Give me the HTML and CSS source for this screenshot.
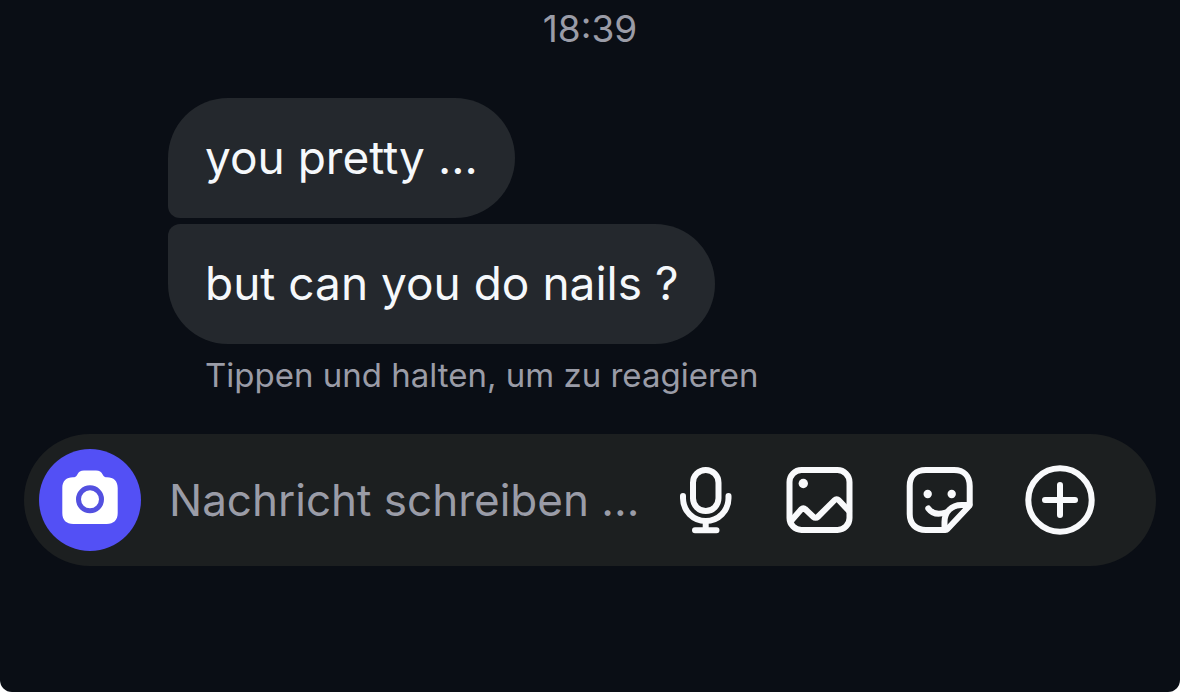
FILE: index.html
```html
<!DOCTYPE html>
<html lang="de">
<head>
    <meta charset="UTF-8" />
    <meta name="viewport" content="width=device-width, initial-scale=1.0"/>
    <title>Chat</title>
    <link rel="stylesheet" href="styles.css">
</head>
<body>
    <div class="chat">
        <main class="messages">
            <time class="timestamp" datetime="18:39">18:39</time>
            <div class="group">
                <p class="bubble bubble-first" lang="en">you pretty ...</p>
                <p class="bubble bubble-last" lang="en">but can you do nails ?</p>
                <p class="hint">Tippen und halten, um zu reagieren</p>
            </div>
        </main>

        <form class="composer">
            <button class="camera" type="button" aria-label="Kamera">
                <svg viewBox="0 0 60 60" width="60" height="60">
                    <path fill="#fff" d="M13 7.300c2 0 3.200-.8 4.200-2.600C18.800 1.800 20.500.5 24 .5h12c3.500 0 5.200 1.300 6.800 4.200 1 1.800 2.200 2.600 4.200 2.600 6.700 0 10.700 4 10.700 10.700v25c0 7-4 11-11 11H13.300c-7 0-11-4-11-11V18c0-6.700 4-10.700 10.700-10.700z"/>
                    <circle class="lens" cx="30" cy="29.300" r="11.500"/>
                </svg>
            </button>
            <input class="field" type="text" aria-label="Nachricht" placeholder="Nachricht schreiben ...">
            <div class="actions">
                <button class="action" type="button" aria-label="Sprachnachricht">
                    <svg viewBox="0 0 72 72" width="72" height="72">
                        <rect x="29" y="6" width="25.500" height="41" rx="12.700"/>
                        <path d="M19 32v2.300a22.700 22.700 0 0 0 45.500 0V32M41.700 57v9M31 66.300h21.500"/>
                    </svg>
                </button>
                <button class="action" type="button" aria-label="Bild">
                    <svg viewBox="0 0 72 72" width="72" height="72">
                        <rect x="5.500" y="6" width="60" height="60" rx="12"/>
                        <path d="M7 57l10.500-12a2.500 2.500 0 0 1 3.600 0l8.400 8a3 3 0 0 0 4.200 0l17-17a2.700 2.700 0 0 1 3.900 0L65 47"/>
                        <circle class="dot" cx="19.300" cy="19.500" r="4.700"/>
                    </svg>
                </button>
                <button class="action" type="button" aria-label="Sticker">
                    <svg viewBox="0 0 72 72" width="72" height="72">
                        <path d="M41 66H22C12 66 5.700 60 5.700 50V22C5.700 12 12 6 22 6h28c10 0 15.700 6 15.700 16v18.500a3 3 0 0 1-1 2L43.500 65a3 3 0 0 1-2.500 1z"/>
                        <path d="M40.500 65v-7c0-10 7-17 17-17h8"/>
                        <path d="M24.300 44.500c4 5.500 10 6.500 17.500 4"/>
                        <circle class="dot" cx="23.700" cy="30" r="4.200"/>
                        <circle class="dot" cx="47.700" cy="30" r="4.200"/>
                    </svg>
                </button>
                <button class="action" type="button" aria-label="Mehr">
                    <svg viewBox="0 0 72 72" width="72" height="72">
                        <circle cx="36" cy="36" r="31.700"/>
                        <path d="M36 21v30M21 36h30"/>
                    </svg>
                </button>
            </div>
        </form>
    </div>
</body>
</html>
```

FILE: styles.css
```css
* {
    box-sizing: border-box;
}
body {
    font-family: Inter, sans-serif;
    margin: 0; padding: 0;
    background: #fff; color: #f5f8fb;
}
p {
    margin: 0;
}
button {
    border: 0; padding: 0;
    background: none; cursor: pointer;
}
svg {
    display: block;
}

.chat {
    min-height: 100vh;
    padding: 4px 24px 24px;
    background: #0a0e15;
    border-radius: 0 0 12px 12px;
}

.timestamp {
    display: block;
    text-align: center;
    font-size: 37px;
    line-height: 50px;
    color: #9a9ca7;
}

.group {
    display: flex;
    flex-direction: column;
    align-items: flex-start;
    gap: 6px;
    margin: 44px 0 0 144px;
}

.bubble {
    padding: 29px 37px 31px;
    font-size: 46px;
    line-height: 60px;
    background: #24282d;
    border-radius: 60px;
}
.bubble-first {
    border-bottom-left-radius: 12px;
}
.bubble-last {
    border-top-left-radius: 12px;
}

.hint {
    padding-left: 37px;
    font-size: 33px;
    line-height: 50px;
    color: #9a9ca7;
}

.composer {
    display: flex;
    align-items: center;
    margin-top: 34px;
    padding: 14px 60px 14px 15px;
    min-height: 132px;
    background: #1c1f20;
    border-radius: 66px;
}

.camera {
    display: flex;
    align-items: center;
    justify-content: center;
    flex: none;
    width: 102px; height: 102px;
    border-radius: 50%;
    background: #5350f5;
}
.lens {
    fill: none;
    stroke: #5350e0;
    stroke-width: 5;
}

.field {
    flex: 1;
    min-width: 0;
    margin-left: 28px;
    padding: 0;
    border: 0; outline: 0;
    background: none;
    font: 44px/60px Inter, sans-serif;
    color: #f5f8fb;
}
.field::placeholder {
    color: #9a9ca7;
    opacity: 1;
}

.actions {
    display: flex;
    flex: none;
    gap: 48px;
}
.action svg {
    fill: none;
    stroke: #f8f9fb;
    stroke-width: 6;
    stroke-linecap: round;
    stroke-linejoin: round;
}
.action .dot {
    fill: #f8f9fb;
    stroke: none;
}
```
